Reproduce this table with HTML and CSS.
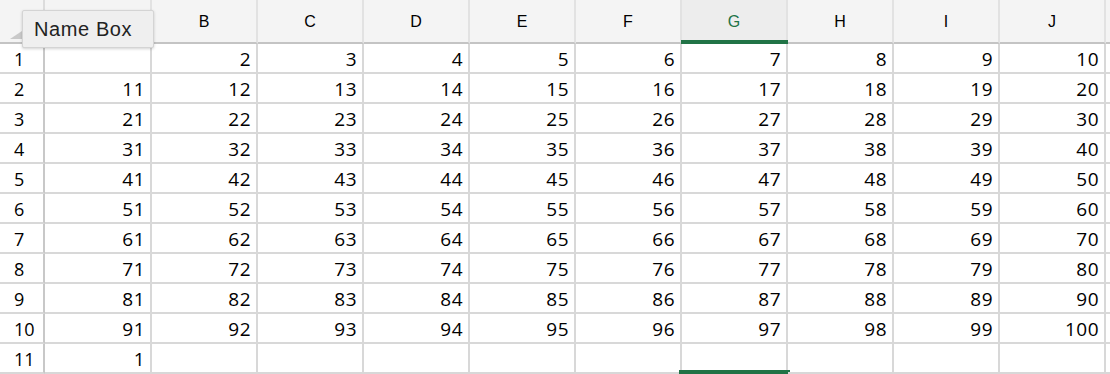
FILE: index.html
```html
<!DOCTYPE html>
<html>
<head>
<meta charset="utf-8">
<link rel="stylesheet" href="styles.css">
</head>
<body>
<div class="sheet">
  <div class="corner"><svg class="all" width="30" height="20" viewBox="0 0 30 20"><polygon points="0,20 30,20 30,0" fill="#c9c9c9"/></svg></div>
  <div class="ch"></div><div class="ch">B</div><div class="ch">C</div><div class="ch">D</div><div class="ch">E</div><div class="ch">F</div><div class="ch sel">G</div><div class="ch">H</div><div class="ch">I</div><div class="ch">J</div><div class="ch"></div>

  <div class="rh">1</div><div class="c"></div><div class="c">2</div><div class="c">3</div><div class="c">4</div><div class="c">5</div><div class="c">6</div><div class="c">7</div><div class="c">8</div><div class="c">9</div><div class="c">10</div><div class="c"></div>
  <div class="rh">2</div><div class="c">11</div><div class="c">12</div><div class="c">13</div><div class="c">14</div><div class="c">15</div><div class="c">16</div><div class="c">17</div><div class="c">18</div><div class="c">19</div><div class="c">20</div><div class="c"></div>
  <div class="rh">3</div><div class="c">21</div><div class="c">22</div><div class="c">23</div><div class="c">24</div><div class="c">25</div><div class="c">26</div><div class="c">27</div><div class="c">28</div><div class="c">29</div><div class="c">30</div><div class="c"></div>
  <div class="rh">4</div><div class="c">31</div><div class="c">32</div><div class="c">33</div><div class="c">34</div><div class="c">35</div><div class="c">36</div><div class="c">37</div><div class="c">38</div><div class="c">39</div><div class="c">40</div><div class="c"></div>
  <div class="rh">5</div><div class="c">41</div><div class="c">42</div><div class="c">43</div><div class="c">44</div><div class="c">45</div><div class="c">46</div><div class="c">47</div><div class="c">48</div><div class="c">49</div><div class="c">50</div><div class="c"></div>
  <div class="rh">6</div><div class="c">51</div><div class="c">52</div><div class="c">53</div><div class="c">54</div><div class="c">55</div><div class="c">56</div><div class="c">57</div><div class="c">58</div><div class="c">59</div><div class="c">60</div><div class="c"></div>
  <div class="rh">7</div><div class="c">61</div><div class="c">62</div><div class="c">63</div><div class="c">64</div><div class="c">65</div><div class="c">66</div><div class="c">67</div><div class="c">68</div><div class="c">69</div><div class="c">70</div><div class="c"></div>
  <div class="rh">8</div><div class="c">71</div><div class="c">72</div><div class="c">73</div><div class="c">74</div><div class="c">75</div><div class="c">76</div><div class="c">77</div><div class="c">78</div><div class="c">79</div><div class="c">80</div><div class="c"></div>
  <div class="rh">9</div><div class="c">81</div><div class="c">82</div><div class="c">83</div><div class="c">84</div><div class="c">85</div><div class="c">86</div><div class="c">87</div><div class="c">88</div><div class="c">89</div><div class="c">90</div><div class="c"></div>
  <div class="rh">10</div><div class="c">91</div><div class="c">92</div><div class="c">93</div><div class="c">94</div><div class="c">95</div><div class="c">96</div><div class="c">97</div><div class="c">98</div><div class="c">99</div><div class="c">100</div><div class="c"></div>
  <div class="rh">11</div><div class="c">1</div><div class="c"></div><div class="c"></div><div class="c"></div><div class="c"></div><div class="c"></div><div class="c selbottom"></div><div class="c"></div><div class="c"></div><div class="c"></div><div class="c"></div>

  <div class="tooltip">Name Box</div>
</div>
</body>
</html>
```

FILE: styles.css
```css
html, body {
  margin: 0;
  padding: 0;
  background: #ffffff;
  overflow: hidden;
}

.sheet {
  position: relative;
  display: grid;
  grid-template-columns: 45px 107px repeat(9, 106px) 20px;
  grid-template-rows: 44px repeat(11, 30px);
  width: 1130px;
}

.sheet > div {
  box-sizing: border-box;
}

.corner {
  background: #f4f4f4;
  border-right: 2px solid #dcdcdc;
  border-bottom: 2px solid #c4c4c4;
  display: flex;
  justify-content: flex-end;
  align-items: flex-end;
  padding: 0 3px 3px 0;
}

.all {
  display: block;
}

.ch {
  background: #f4f4f4;
  border-right: 2px solid #e2e2e2;
  border-bottom: 2px solid #c4c4c4;
  font-family: "Liberation Sans", Arial, sans-serif;
  font-size: 16px;
  color: #000;
  display: flex;
  align-items: center;
  justify-content: center;
  padding-top: 2px;
  position: relative;
}

.ch.sel {
  color: #217346;
  background: #ededed;
}

.ch.sel::after {
  content: "";
  position: absolute;
  left: -1px;
  right: -2px;
  bottom: -2px;
  height: 4px;
  background: #217346;
}

.rh {
  border-right: 2px solid #c8c8c8;
  border-bottom: 2px solid #d8d8d8;
  font-family: "Open Sans", sans-serif;
  font-size: 18px;
  color: #000;
  padding-left: 14px;
  line-height: 28px;
  padding-top: 1px;
}

.c {
  border-right: 2px solid #d8d8d8;
  border-bottom: 2px solid #d8d8d8;
  font-family: "Open Sans", sans-serif;
  font-size: 19px;
  letter-spacing: 0.5px;
  color: #000;
  text-align: right;
  padding-right: 5px;
  line-height: 28px;
  padding-top: 1px;
  position: relative;
}

.c.selbottom::after {
  content: "";
  position: absolute;
  left: -3px;
  right: -4px;
  top: 26px;
  height: 5px;
  background: #217346;
}

.tooltip {
  position: absolute;
  left: 22px;
  top: 10px;
  width: 132px;
  height: 38px;
  background: #efefef;
  border: 1px solid #d4d4d4;
  border-radius: 2px;
  box-shadow: 0 1px 3px rgba(0, 0, 0, 0.18);
  font-family: "Liberation Sans", Arial, sans-serif;
  font-size: 20px;
  letter-spacing: 0.6px;
  color: #222;
  padding-left: 11px;
  line-height: 36px;
}
```
